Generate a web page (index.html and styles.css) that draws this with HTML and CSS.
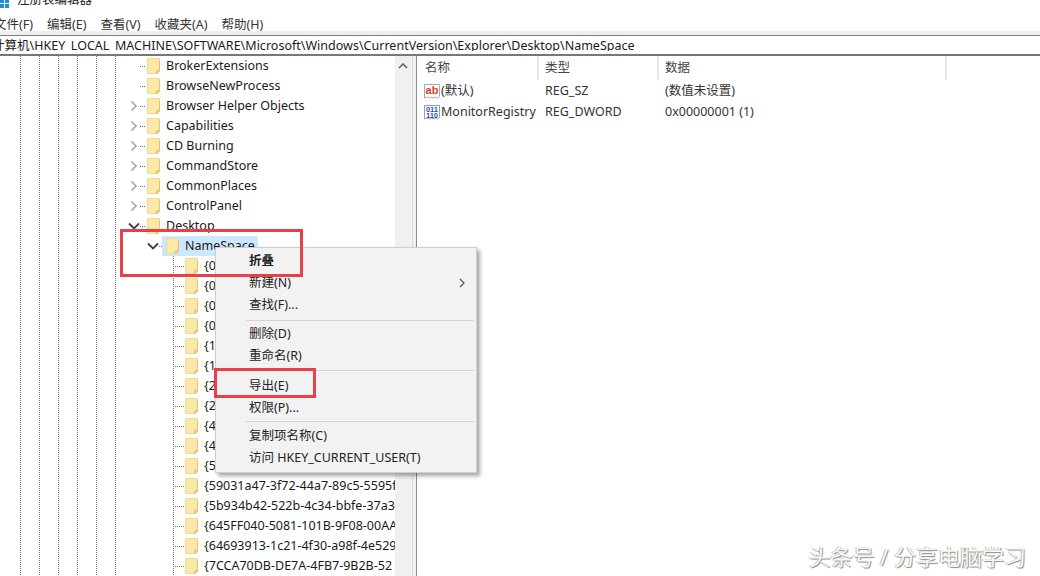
FILE: index.html
```html
<!DOCTYPE html>
<html lang="zh-CN">
<head>
<meta charset="utf-8">
<title>注册表编辑器</title>
<link rel="stylesheet" href="styles.css">
</head>
<body>
<svg class="defs" width="0" height="0" aria-hidden="true">
  <symbol id="folder" viewBox="0 0 13 16">
    <path d="M.5.5h12v13l-2.500 2H.5z" fill="#fce8a8" stroke="#f0d890"/>
    <path d="M12.500 2v11.500l-2.500 2h-1l1-3h2.500" fill="#f2d284" stroke="#e6c26e"/>
  </symbol>
  <symbol id="closed" viewBox="0 0 8 12">
    <path d="M1.500 1.500 6 6l-4.500 4.500" fill="none" stroke="#a8a8a8" stroke-width="1.700"/>
  </symbol>
  <symbol id="open" viewBox="0 0 12 8">
    <path d="M1 1.500 6 6.500 11 1.500" fill="none" stroke="#404040" stroke-width="1.800"/>
  </symbol>
</svg>
<header class="titlebar">
  <svg class="appicon" width="10" height="8" viewBox="0 0 10 8"><path d="M0 0h4v3H0zM5 0h4v3H5zM0 4h4v4H0zM5 4h4v4H5z" fill="#1c8fd6"/></svg>
  <span class="titletext">注册表编辑器</span>
</header>
<nav class="menubar">
  <span>文件(F)</span><span>编辑(E)</span><span>查看(V)</span><span>收藏夹(A)</span><span>帮助(H)</span>
</nav>
<div class="addr"><span class="addrtext">计算机\HKEY_LOCAL_MACHINE\SOFTWARE\Microsoft\Windows\CurrentVersion\Explorer\Desktop\NameSpace</span></div>
<main class="main">
  <section class="tree">
    <div class="row a"><i class="tw"></i><i class="conn"></i><svg class="fo"><use href="#folder"/></svg><span class="lb">BrokerExtensions</span></div>
    <div class="row a"><i class="tw"></i><i class="conn"></i><svg class="fo"><use href="#folder"/></svg><span class="lb">BrowseNewProcess</span></div>
    <div class="row a"><i class="tw"><svg class="ch"><use href="#closed"/></svg></i><i class="conn"></i><svg class="fo"><use href="#folder"/></svg><span class="lb">Browser Helper Objects</span></div>
    <div class="row a"><i class="tw"><svg class="ch"><use href="#closed"/></svg></i><i class="conn"></i><svg class="fo"><use href="#folder"/></svg><span class="lb">Capabilities</span></div>
    <div class="row a"><i class="tw"><svg class="ch"><use href="#closed"/></svg></i><i class="conn"></i><svg class="fo"><use href="#folder"/></svg><span class="lb">CD Burning</span></div>
    <div class="row a"><i class="tw"><svg class="ch"><use href="#closed"/></svg></i><i class="conn"></i><svg class="fo"><use href="#folder"/></svg><span class="lb">CommandStore</span></div>
    <div class="row a"><i class="tw"><svg class="ch"><use href="#closed"/></svg></i><i class="conn"></i><svg class="fo"><use href="#folder"/></svg><span class="lb">CommonPlaces</span></div>
    <div class="row a"><i class="tw"><svg class="ch"><use href="#closed"/></svg></i><i class="conn"></i><svg class="fo"><use href="#folder"/></svg><span class="lb">ControlPanel</span></div>
    <div class="row a"><i class="tw"><svg class="chopen"><use href="#open"/></svg></i><i class="conn"></i><svg class="fo"><use href="#folder"/></svg><span class="lb">Desktop</span></div>
    <div class="row b"><i class="tw"><svg class="chopen"><use href="#open"/></svg></i><i class="conn"></i><span class="selected"><svg class="fo"><use href="#folder"/></svg><span class="lb">NameSpace</span></span></div>
    <div class="kids">
      <div class="row c"><i class="conn"></i><svg class="fo"><use href="#folder"/></svg><span class="lb">{0</span></div>
      <div class="row c"><i class="conn"></i><svg class="fo"><use href="#folder"/></svg><span class="lb">{0</span></div>
      <div class="row c"><i class="conn"></i><svg class="fo"><use href="#folder"/></svg><span class="lb">{0</span></div>
      <div class="row c"><i class="conn"></i><svg class="fo"><use href="#folder"/></svg><span class="lb">{0</span></div>
      <div class="row c"><i class="conn"></i><svg class="fo"><use href="#folder"/></svg><span class="lb">{1</span></div>
      <div class="row c"><i class="conn"></i><svg class="fo"><use href="#folder"/></svg><span class="lb">{1</span></div>
      <div class="row c"><i class="conn"></i><svg class="fo"><use href="#folder"/></svg><span class="lb">{2</span></div>
      <div class="row c"><i class="conn"></i><svg class="fo"><use href="#folder"/></svg><span class="lb">{2</span></div>
      <div class="row c"><i class="conn"></i><svg class="fo"><use href="#folder"/></svg><span class="lb">{4</span></div>
      <div class="row c"><i class="conn"></i><svg class="fo"><use href="#folder"/></svg><span class="lb">{4</span></div>
      <div class="row c"><i class="conn"></i><svg class="fo"><use href="#folder"/></svg><span class="lb">{5</span></div>
      <div class="row c"><i class="conn"></i><svg class="fo"><use href="#folder"/></svg><span class="lb">{59031a47-3f72-44a7-89c5-5595fe6b30ee}</span></div>
      <div class="row c"><i class="conn"></i><svg class="fo"><use href="#folder"/></svg><span class="lb">{5b934b42-522b-4c34-bbfe-37a3ef7d4f12}</span></div>
      <div class="row c"><i class="conn"></i><svg class="fo"><use href="#folder"/></svg><span class="lb">{645FF040-5081-101B-9F08-00AA002F954E}</span></div>
      <div class="row c"><i class="conn"></i><svg class="fo"><use href="#folder"/></svg><span class="lb">{64693913-1c21-4f30-a98f-4e52906d3b56}</span></div>
      <div class="row c"><i class="conn"></i><svg class="fo"><use href="#folder"/></svg><span class="lb">{7CCA70DB-DE7A-4FB7-9B2B-52</span></div>
    </div>
  </section>
  <div class="vscroll"><svg class="upch" width="10" height="6" viewBox="0 0 10 6"><path d="M1 5 5 1l4 4" fill="none" stroke="#606060" stroke-width="1.600"/></svg></div>
  <div class="splitter"></div>
  <section class="list">
    <div class="lhead">
      <span class="hc">名称</span><span class="hc">类型</span><span class="hc">数据</span>
    </div>
    <div class="lrow">
      <span class="nm"><svg class="vi" viewBox="0 0 16 16"><path d="M.5 1.500h15v12l-2 1.500-2-1-2 1-2-1-2 1-2-1-3 1z" fill="#fff" stroke="#b0a8a0"/><text x="8" y="10.500" class="abt">ab</text></svg>(默认)</span><span>REG_SZ</span><span>(数值未设置)</span>
    </div>
    <div class="lrow">
      <span class="nm"><svg class="vi" viewBox="0 0 16 16"><path d="M.5 1.500h15v12l-2 1.500-2-1-2 1-2-1-2 1-2-1-3 1z" fill="#fff" stroke="#8f9fc0"/><text x="8" y="7.500" class="bit">011</text><text x="8" y="13.500" class="bit">110</text></svg>MonitorRegistry</span><span>REG_DWORD</span><span>0x00000001 (1)</span>
    </div>
  </section>
</main>
<div class="ctx">
  <div class="mi strong">折叠</div>
  <div class="mi sub">新建(N)<svg width="6" height="10" viewBox="0 0 6 10"><path d="M1 1l4 4-4 4" fill="none" stroke="#555" stroke-width="1.200"/></svg></div>
  <div class="mi">查找(F)...</div>
  <div class="sep s1"></div>
  <div class="mi">删除(D)</div>
  <div class="mi">重命名(R)</div>
  <div class="sep s2"></div>
  <div class="mi">导出(E)</div>
  <div class="mi">权限(P)...</div>
  <div class="sep s3"></div>
  <div class="mi">复制项名称(C)</div>
  <div class="mi">访问 HKEY_CURRENT_USER(T)</div>
</div>
<div class="mark m1"></div>
<div class="mark m2"></div>
<div class="watermark">头条号 / 分享电脑学习</div>
</body>
</html>
```
FILE: styles.css
```css
* { box-sizing: border-box; }
html, body { margin: 0; padding: 0; }
body {
  position: relative;
  width: 1040px;
  height: 576px;
  overflow: hidden;
  display: flex;
  flex-direction: column;
  background: #fff;
  color: #1a1a1a;
  font: 12.5px/20px "Noto Sans", "Noto Sans CJK SC", sans-serif;
}
.defs { position: absolute; }
.titlebar {
  height: 10px;
  flex: none;
  display: flex;
  align-items: flex-end;
  overflow: hidden;
  padding-bottom: 2px;
}
.appicon { flex: none; }
.titletext { margin-left: 7px; font-size: 12.5px; line-height: 16px; color: #222; flex: none; }
.menubar {
  height: 25px;
  flex: none;
  display: flex;
  gap: 14px;
  padding: 6px 0 0;
  margin-left: -6px;
  background: linear-gradient(#fff 21px, #efefef 21px);
  line-height: 18px;
  white-space: nowrap;
  color: #333;
}
.addr {
  height: 21px;
  flex: none;
  border-top: 1px solid #808080;
  border-bottom: 2px solid #787878;
  overflow: hidden;
  white-space: nowrap;
  padding-top: 1px;
}
.addrtext { display: block; margin-left: -8px; height: 14px; line-height: 17px; overflow: hidden; letter-spacing: .012px; }
.main { flex: 1; display: flex; min-height: 0; }
.tree {
  width: 395px;
  flex: none;
  overflow: hidden;
  white-space: nowrap;
  background-image:
    repeating-linear-gradient(#777 0 1px, transparent 1px 2px),
    repeating-linear-gradient(#777 0 1px, transparent 1px 2px),
    repeating-linear-gradient(#777 0 1px, transparent 1px 2px),
    repeating-linear-gradient(#777 0 1px, transparent 1px 2px),
    repeating-linear-gradient(#777 0 1px, transparent 1px 2px),
    repeating-linear-gradient(#777 0 1px, transparent 1px 2px);
  background-size: 1px 100%;
  background-repeat: no-repeat;
  background-position: 20px 0, 39px 0, 58px 0, 77px 0, 96px 0, 115px 0;
}
.row { height: 20px; display: flex; align-items: center; }
.row.a { padding-left: 127px; }
.row.b { padding-left: 146px; }
.row.c { padding-left: 173px; }
.kids {
  background: repeating-linear-gradient(#777 0 1px, transparent 1px 2px) 173px 0 / 1px 100% no-repeat;
}
.tw { width: 13px; height: 20px; flex: none; display: flex; align-items: center; justify-content: center; }
.conn { width: 6px; height: 1px; flex: none; margin-right: 1px; background: repeating-linear-gradient(90deg, #777 0 1px, transparent 1px 2px); }
.row.c .conn { width: 11px; margin-right: 1px; }
.ch { width: 8px; height: 12px; }
.chopen { width: 12px; height: 8px; }
.fo { width: 13px; height: 16px; flex: none; }
.lb { margin-left: 6px; }
.selected { display: flex; align-items: center; height: 20px; background: #cce8ff; margin-left: -4px; padding: 0 3px 0 4px; }
.vscroll { width: 17px; flex: none; background: #f0f0f0; padding: 7px 0 0 3px; }
.upch { display: block; }
.splitter { width: 5px; flex: none; background: #f0f0f0; border-left: 1px solid #dcdcdc; border-right: 1px solid #8c8c8c; }
.list { flex: 1; min-width: 0; }
.lhead {
  height: 24px;
  display: grid;
  grid-template-columns: 122px 120px 288px;
  line-height: 23px;
  color: #444;
}
.hc { padding-left: 6px; border-right: 2px solid #e6e6e6; }
.hc:first-child { padding-left: 8px; }
.lrow {
  height: 21px;
  display: grid;
  grid-template-columns: 122px 120px 288px;
  line-height: 21px;
  color: #333;
}
.lrow span { padding-left: 6px; white-space: nowrap; }
.lrow .nm { padding-left: 7px; display: flex; align-items: center; }
.vi { width: 16px; height: 16px; flex: none; margin-right: 1px; }
.abt { font: bold 11px "Liberation Sans", sans-serif; fill: #d8401f; text-anchor: middle; }
.bit { font: bold 7.500px "Liberation Sans", sans-serif; fill: #1f50b4; text-anchor: middle; }
.ctx {
  position: absolute;
  left: 215px;
  top: 247px;
  width: 262px;
  height: 226px;
  padding-top: 2px;
  background: #f2f2f2;
  border: 1px solid #cfcfcf;
  box-shadow: 3px 3px 4px rgba(0, 0, 0, .35);
  color: #222;
}
.mi { height: 22px; line-height: 22px; padding-left: 33px; }
.strong { font-weight: 700; }
.sub { display: flex; justify-content: space-between; align-items: center; padding-right: 11px; }
.sep { height: 1px; background: #d4d4d4; margin-right: 2px; margin-left: 30px; }
.s1 { margin-top: 4px; margin-bottom: 2px; }
.s2 { margin-top: 3px; margin-bottom: 4px; }
.s3 { margin-top: 2px; margin-bottom: 3px; }
.mark { position: absolute; border: 3px solid #e8404a; }
.m1 { left: 120px; top: 229px; width: 183px; height: 48px; }
.m2 { left: 214px; top: 368px; width: 102px; height: 30px; }
.watermark {
  position: absolute;
  right: 14px;
  bottom: 6px;
  font-size: 22px;
  line-height: 28px;
  color: #f8f8f8;
  text-shadow: 1px 1px 1px #8a8a8a, -1px 0 0 #bdbdbd;
  white-space: nowrap;
}
```
